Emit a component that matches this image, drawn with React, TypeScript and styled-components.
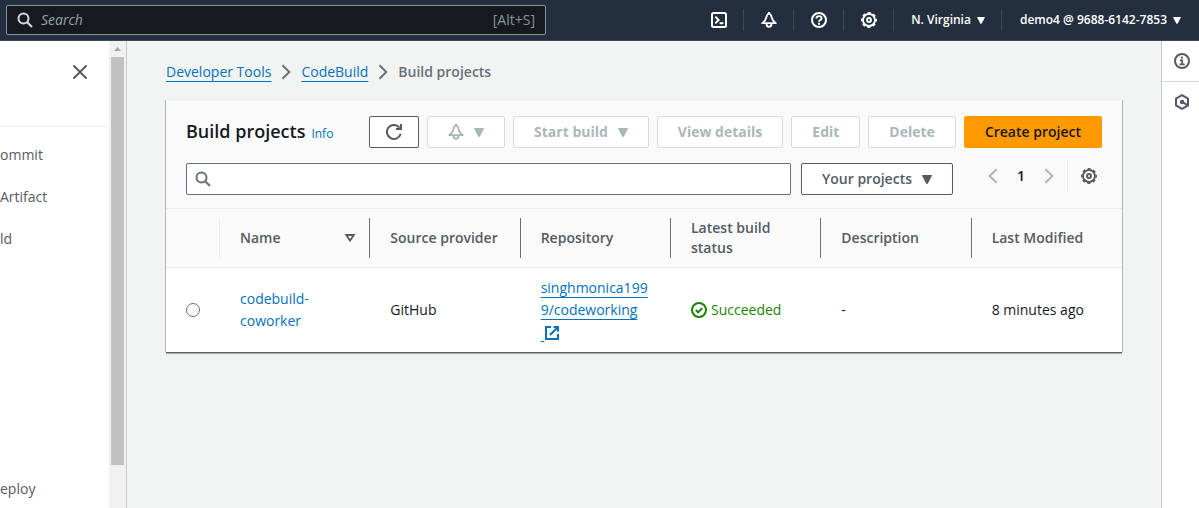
import React from "react";
import styled, { createGlobalStyle, css } from "styled-components";

const Global = createGlobalStyle`
  *, *::before, *::after { box-sizing: border-box; }
  body {
    margin: 0;
    background: #f2f3f3;
    color: #16191f;
    font-family: "Open Sans", "Noto Sans", sans-serif;
    font-size: 14px;
    line-height: 22px;
  }
  button, input, select { font: inherit; }
  svg { display: block; flex: none; }
`;

/* ---------- icons ---------- */

const Icon = styled.svg.attrs({ viewBox: "0 0 16 16", "aria-hidden": true })`
  width: 16px;
  height: 16px;
  fill: none;
  stroke: currentColor;
  stroke-width: 2;
`;

const SearchIcon = () => (
  <Icon>
    <circle cx="6.5" cy="6.5" r="5" />
    <path d="M10.2 10.2 15 15" />
  </Icon>
);

const BellIcon = () => (
  <Icon>
    <path
      d="M8 1.600C6.600 1.600 5.800 3.200 5.300 5.500 4.800 8 3.600 9.400 1.200 11.200h13.600C12.400 9.400 11.200 8 10.700 5.500 10.200 3.200 9.400 1.600 8 1.600Z"
      strokeWidth="1.800"
      strokeLinejoin="round"
    />
    <path d="M8 0v2" />
    <path d="M5.700 11.500v1a2.300 2.300 0 0 0 4.600 0v-1" />
  </Icon>
);

const GearIcon = () => (
  <Icon>
    <circle cx="8" cy="8" r="6" strokeWidth="1.8" />
    <circle cx="8" cy="8" r="7.2" strokeWidth="1.6" strokeDasharray="3.1 2.555" strokeDashoffset="1.55" />
    <circle cx="8" cy="8" r="2" strokeWidth="1.9" />
  </Icon>
);

const TerminalIcon = () => (
  <Icon>
    <rect x="1" y="1" width="14" height="14" rx="1.5" />
    <path d="M4.3 4.6 7.6 8 4.3 11.4" />
    <path d="M8.6 11.2h3.8" />
  </Icon>
);

const HelpIcon = () => (
  <Icon>
    <circle cx="8" cy="8" r="7" />
    <path d="M5.4 6.6C5.4 5 6.5 4.200 8 4.200s2.6.9 2.6 2.200C10.600 7.900 8 7.900 8 9.800" strokeWidth="1.8" />
    <path d="M8 10.800v1.900" />
  </Icon>
);

const InfoIcon = () => (
  <Icon>
    <circle cx="8" cy="8" r="7" />
    <path d="M7.800 3.600v2" />
    <path d="M6 7.400h2.200V11.500M5.600 11.300h5" strokeWidth="1.800" />
  </Icon>
);

const HexIcon = () => (
  <Icon>
    <path d="M8 1.200 14 4.600v6.800L8 14.800 2 11.400V4.600Z" />
    <circle cx="8" cy="8" r="1.200" />
    <path d="M8.500 8.200 13.500 11.200" />
  </Icon>
);

const RefreshIcon = () => (
  <Icon>
    <path d="M14.700 9.800A7 7 0 1 1 13.500 3.700" />
    <path d="M15 0v5H10" />
  </Icon>
);

const CloseIcon = () => (
  <Icon>
    <path d="M2 2l12 12M14 2 2 14" strokeLinecap="round" />
  </Icon>
);

const ChevronRight = () => (
  <Icon>
    <path d="m4.500 1.200 6.800 6.800-6.800 6.800" />
  </Icon>
);

const ChevronLeft = () => (
  <Icon>
    <path d="M11.500 1.200 4.700 8l6.800 6.800" />
  </Icon>
);

const ExternalIcon = () => (
  <Icon>
    <path d="M7 2H2v12h12V9" />
    <path d="M9.500 2H14v4.500M14 2 6 10" />
  </Icon>
);

const SuccessIcon = () => (
  <Icon>
    <circle cx="8" cy="8" r="7" />
    <path d="m4.800 8 2.300 2.300 4.200-4.200" />
  </Icon>
);

const SortIcon = () => (
  <Icon>
    <path d="M4.200 5h7.600L8 10.600Z" strokeWidth="1.800" />
  </Icon>
);

const CaretShape = styled.svg.attrs({ viewBox: "0 0 10 9", "aria-hidden": true })<{ $small?: boolean }>`
  width: ${(p) => (p.$small ? 8 : 10)}px;
  height: ${(p) => (p.$small ? 7 : 9)}px;
  fill: currentColor;
`;

const Caret = ({ small }: { small?: boolean }) => (
  <CaretShape $small={small}>
    <path d="M.6 0h8.800q.9.100.400 1L5.900 8.500q-.9.900-1.800 0L.2 1Q-.3.100.6 0Z" />
  </CaretShape>
);

/* ---------- top bar ---------- */

const TopBar = styled.header`
  display: flex;
  align-items: center;
  justify-content: space-between;
  height: 41px;
  padding-left: 6px;
  background: #232f3e;
  border-bottom: 1px solid #414750;
  color: #fff;
`;

const GlobalSearch = styled.label`
  display: flex;
  align-items: center;
  gap: 8px;
  flex: 0 1 540px;
  height: 30px;
  padding: 0 10px;
  background: #16191f;
  border: 1px solid #879596;
  border-radius: 2px;
  color: #d5dbdb;
`;

const GlobalInput = styled.input`
  flex: 1;
  min-width: 0;
  padding: 0;
  border: 0;
  outline: 0;
  background: transparent;
  color: #fff;
  &::placeholder { color: #95a5a6; font-style: italic; opacity: 1; }
`;

const Shortcut = styled.span`
  color: #879596;
`;

const TopNav = styled.nav`
  display: flex;
  align-items: center;
`;

const TopItem = styled.button<{ $first?: boolean }>`
  display: flex;
  align-items: center;
  gap: 6px;
  height: 22px;
  padding: 0 16px 0 17px;
  border: 0;
  border-left: 1px solid ${(p) => (p.$first ? "transparent" : "#414750")};
  background: transparent;
  color: #fff;
  font-size: 12px;
  font-weight: 600;
  white-space: nowrap;
`;

const AccountItem = styled(TopItem)`
  padding: 0 18px;
`;

/* ---------- frame ---------- */

const Shell = styled.div`
  display: grid;
  grid-template-columns: 127px minmax(0, 1fr) 38px;
  min-height: calc(100vh - 41px);
`;

const Sidebar = styled.aside`
  display: grid;
  grid-template-columns: 1fr 17px;
  background: #fff;
  border-right: 1px solid #c6cccd;
`;

const SidebarTop = styled.div`
  display: flex;
  justify-content: flex-end;
  height: 86px;
  padding: 23px 21px 0 0;
  border-bottom: 1px solid #eaeded;
`;

const IconButton = styled.button<{ $muted?: boolean }>`
  display: flex;
  align-items: center;
  justify-content: center;
  height: 16px;
  padding: 0;
  border: 0;
  background: transparent;
  color: ${(p) => (p.$muted ? "#aab7b8" : "#545b64")};
`;

const SideLinks = styled.ul`
  display: flex;
  flex-direction: column;
  gap: 20px;
  margin: 0;
  padding: 17px 0 0;
  list-style: none;
`;

const SideEntry = styled.li<{ $apart?: boolean }>`
  height: 22px;
  ${(p) => p.$apart && css`margin-top: 208px;`}
`;

const SideLink = styled.a`
  color: #545b64;
  text-decoration: none;
`;

const ScrollTrack = styled.div`
  padding: 6px 2px 0;
  background: #f1f1f1;
  color: #a3a3a3;
`;

const ScrollArrow = styled.svg`
  width: 7px;
  height: 4px;
  margin: 0 auto 6px;
  fill: currentColor;
`;

const ScrollThumb = styled.div`
  height: 408px;
  background: #c1c1c1;
`;

const ToolRail = styled.aside`
  background: #fff;
  border-left: 1px solid #c6cccd;
`;

const RailButton = styled.button`
  display: flex;
  align-items: center;
  justify-content: center;
  width: 100%;
  height: 40px;
  padding: 0 0 0 3px;
  border: 0;
  background: transparent;
  color: #545b64;
  & + & { height: 41px; border-top: 1px solid #d5dbdb; }
`;

const Main = styled.main`
  padding: 20px 39px;
`;

/* ---------- breadcrumb ---------- */

const Crumbs = styled.ol`
  display: flex;
  align-items: center;
  gap: 7px;
  margin: 0 0 17px;
  padding: 0;
  list-style: none;
  color: #687078;
`;

const Crumb = styled.li`
  display: flex;
  align-items: center;
  gap: 7px;
  font-weight: 600;
`;

const Link = styled.a<{ $plain?: boolean }>`
  color: #0073bb;
  font-weight: 400;
  text-decoration: ${(p) => (p.$plain ? "none" : "underline")};
  text-decoration-thickness: 1px;
  text-underline-offset: 4px;
  text-decoration-skip-ink: none;
`;

/* ---------- card ---------- */

const Card = styled.section`
  background: #fff;
  box-shadow: 0 1px 0 #545b64, 1px 0 0 #aab7b8, -1px 0 0 #aab7b8, 0 0 0 1px #eaeded, 0 2px 1px #aab7b8;
`;

const CardHead = styled.div`
  display: flex;
  flex-direction: column;
  gap: 15px;
  padding: 16px 20px 13px;
  background: #fafafa;
  border-bottom: 1px solid #eaeded;
`;

const HeadRow = styled.div`
  display: flex;
  align-items: center;
  justify-content: space-between;
`;

const TitleGroup = styled.div`
  display: flex;
  align-items: baseline;
  align-self: flex-start;
  gap: 6px;
`;

const Title = styled.h1`
  margin: 0;
  font-size: 18px;
  font-weight: 600;
  line-height: 30px;
`;

const InfoLink = styled.a`
  color: #0073bb;
  font-size: 12px;
  text-decoration: none;
`;

const Actions = styled.div`
  display: flex;
  gap: 8px;
`;

const tones = {
  normal: css`background: #fff; border-color: #545b64; color: #545b64;`,
  disabled: css`background: #fff; border-color: #d5dbdb; color: #aab7b8; font-weight: 700;`,
  primary: css`background: #ff9900; border-color: #ff9900; color: #16191f;`,
};

const Button = styled.button<{ $tone?: keyof typeof tones; $compact?: boolean }>`
  display: flex;
  align-items: center;
  justify-content: center;
  gap: 10px;
  height: 32px;
  padding: 0 ${(p) => (p.$compact ? 16 : 20)}px;
  border: 1px solid;
  border-radius: 2px;
  font-weight: 600;
  white-space: nowrap;
  ${(p) => tones[p.$tone ?? "disabled"]}
`;

const FilterBox = styled.label`
  display: flex;
  align-items: center;
  gap: 8px;
  flex: 1;
  height: 32px;
  margin-right: 10px;
  padding: 0 8px;
  background: #fff;
  border: 1px solid #687078;
  border-radius: 2px;
  color: #687078;
`;

const FilterInput = styled.input`
  flex: 1;
  min-width: 0;
  padding: 0;
  border: 0;
  outline: 0;
  background: transparent;
`;

const SelectBox = styled.div`
  display: grid;
  grid-template-columns: 1fr 30px;
  align-items: center;
  width: 152px;
  height: 32px;
  color: #545b64;
  background: #fff;
  border: 1px solid #545b64;
  border-radius: 2px;
  & > svg { grid-area: 1 / 2; pointer-events: none; }
`;

const ScopeSelect = styled.select`
  grid-area: 1 / 1 / 2 / 3;
  height: 30px;
  padding: 0 30px 0 20px;
  border: 0;
  outline: 0;
  appearance: none;
  background: transparent;
  color: inherit;
  font-weight: 600;
`;

const Pager = styled.div`
  display: flex;
  align-items: center;
  align-self: flex-start;
  gap: 10px;
  height: 26px;
  margin-left: 32px;
`;

const PageList = styled.div`
  display: flex;
  align-items: center;
  gap: 14px;
`;

const PageNumber = styled.button`
  width: 12px;
  padding: 0;
  border: 0;
  background: transparent;
  color: #16191f;
  font-weight: 600;
  text-align: center;
`;

const Preferences = styled.div`
  display: flex;
  align-items: center;
  height: 32px;
  padding: 0 5px 0 13px;
  border-left: 1px solid #eaeded;
`;

/* ---------- table ---------- */

const Table = styled.table`
  width: 100%;
  table-layout: fixed;
  border-collapse: collapse;
`;

const HeadCell = styled.th<{ $narrow?: boolean }>`
  width: ${(p) => (p.$narrow ? "54px" : "auto")};
  padding: 9px 0;
  background: #fafafa;
  border-bottom: 1px solid #eaeded;
  color: #545b64;
  font-weight: 600;
  line-height: 20px;
  text-align: left;
`;

const HeadLabel = styled.div<{ $edge?: string }>`
  display: flex;
  align-items: center;
  justify-content: space-between;
  height: 40px;
  padding: 0 11px 0 20px;
  border-right: 1px solid ${(p) => p.$edge ?? "#687078"};
`;

const Cell = styled.td`
  height: 84px;
  padding: 9px 20px;
  vertical-align: middle;
  overflow-wrap: anywhere;
`;

const Radio = styled.input`
  display: block;
  width: 14px;
  height: 14px;
  margin: 0;
  border: 1px solid #687078;
  border-radius: 50%;
  background: #fff;
  appearance: none;
  &:checked { border: 4px solid #0073bb; }
`;

const Status = styled.span`
  display: flex;
  align-items: center;
  gap: 4px;
  color: #1d8102;
`;

const KeepTogether = styled.span`
  white-space: nowrap;
`;

const InlineIcon = styled.span`
  display: inline-block;
  vertical-align: middle;
`;

const columns = ["Source provider", "Repository", "Latest build status", "Description", "Last Modified"];
const services = ["ommit", "Artifact", "ld", "eploy"];

export default function App() {
  return (
    <>
      <Global />
      <TopBar>
        <GlobalSearch>
          <SearchIcon />
          <GlobalInput type="search" placeholder="Search" aria-label="Search" />
          <Shortcut>[Alt+S]</Shortcut>
        </GlobalSearch>
        <TopNav>
          <TopItem $first aria-label="CloudShell"><TerminalIcon /></TopItem>
          <TopItem aria-label="Notifications"><BellIcon /></TopItem>
          <TopItem aria-label="Help"><HelpIcon /></TopItem>
          <TopItem aria-label="Settings"><GearIcon /></TopItem>
          <TopItem aria-haspopup="menu">N. Virginia <Caret small /></TopItem>
          <AccountItem aria-haspopup="menu">demo4 @ 9688-6142-7853 <Caret small /></AccountItem>
        </TopNav>
      </TopBar>
      <Shell>
        <Sidebar>
          <div>
            <SidebarTop>
              <IconButton aria-label="Close navigation"><CloseIcon /></IconButton>
            </SidebarTop>
            <SideLinks>
              {services.map((name) => (
                <SideEntry key={name} $apart={name === "eploy"}>
                  <SideLink href="#">{name}</SideLink>
                </SideEntry>
              ))}
            </SideLinks>
          </div>
          <ScrollTrack>
            <ScrollArrow viewBox="0 0 7 4"><path d="M3.500 0 7 4H0Z" /></ScrollArrow>
            <ScrollThumb />
          </ScrollTrack>
        </Sidebar>

        <Main>
          <nav aria-label="Breadcrumbs">
            <Crumbs>
              <Crumb><Link href="#">Developer Tools</Link><ChevronRight /></Crumb>
              <Crumb><Link href="#">CodeBuild</Link><ChevronRight /></Crumb>
              <Crumb aria-current="page">Build projects</Crumb>
            </Crumbs>
          </nav>

          <Card>
            <CardHead>
              <HeadRow>
                <TitleGroup>
                  <Title>Build projects</Title>
                  <InfoLink href="#">Info</InfoLink>
                </TitleGroup>
                <Actions>
                  <Button $tone="normal" $compact aria-label="Refresh"><RefreshIcon /></Button>
                  <Button disabled aria-label="Notify"><BellIcon /><Caret /></Button>
                  <Button disabled>Start build <Caret /></Button>
                  <Button disabled>View details</Button>
                  <Button disabled>Edit</Button>
                  <Button disabled>Delete</Button>
                  <Button $tone="primary">Create project</Button>
                </Actions>
              </HeadRow>
              <HeadRow>
                <FilterBox>
                  <SearchIcon />
                  <FilterInput type="search" aria-label="Find build projects" />
                </FilterBox>
                <SelectBox>
                  <ScopeSelect aria-label="Project scope">
                    <option>Your projects</option>
                  </ScopeSelect>
                  <Caret />
                </SelectBox>
                <Pager>
                  <PageList>
                    <IconButton $muted aria-label="Previous page"><ChevronLeft /></IconButton>
                    <PageNumber>1</PageNumber>
                    <IconButton $muted aria-label="Next page"><ChevronRight /></IconButton>
                  </PageList>
                  <Preferences>
                    <IconButton aria-label="Preferences"><GearIcon /></IconButton>
                  </Preferences>
                </Pager>
              </HeadRow>
            </CardHead>
            <Table>
              <thead>
                <tr>
                  <HeadCell $narrow aria-label="Selection"><HeadLabel $edge="#eaeded" /></HeadCell>
                  <HeadCell><HeadLabel>Name <SortIcon /></HeadLabel></HeadCell>
                  {columns.map((label, i) => (
                    <HeadCell key={label}>
                      <HeadLabel $edge={i === columns.length - 1 ? "transparent" : undefined}>{label}</HeadLabel>
                    </HeadCell>
                  ))}
                </tr>
              </thead>
              <tbody>
                <tr>
                  <Cell><Radio type="radio" name="project" aria-label="codebuild-coworker" /></Cell>
                  <Cell><Link $plain href="#">codebuild-coworker</Link></Cell>
                  <Cell>GitHub</Cell>
                  <Cell>
                    <Link href="#">
                      singhmonica1999/codeworking
                      <wbr />
                      <KeepTogether>&nbsp;<InlineIcon><ExternalIcon /></InlineIcon></KeepTogether>
                    </Link>
                  </Cell>
                  <Cell><Status><SuccessIcon />Succeeded</Status></Cell>
                  <Cell>-</Cell>
                  <Cell>8 minutes ago</Cell>
                </tr>
              </tbody>
            </Table>
          </Card>
        </Main>

        <ToolRail>
          <RailButton aria-label="Info"><InfoIcon /></RailButton>
          <RailButton aria-label="Tutorials"><HexIcon /></RailButton>
        </ToolRail>
      </Shell>
    </>
  );
}
